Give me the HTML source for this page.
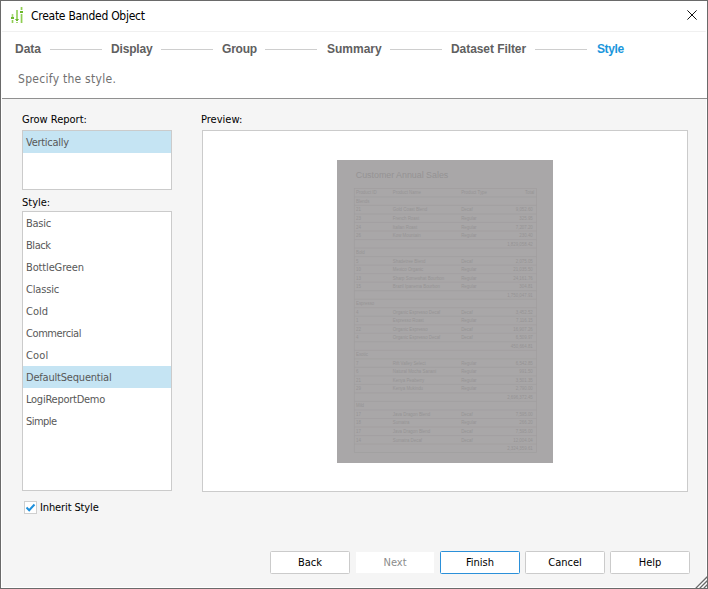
<!DOCTYPE html>
<html>
<head>
<meta charset="utf-8">
<title>Create Banded Object</title>
<style>
*{box-sizing:border-box;margin:0;padding:0}
html,body{width:708px;height:589px;overflow:hidden;background:#f5f5f5}
body{position:relative;font-family:"DejaVu Sans Condensed","DejaVu Sans","Liberation Sans",sans-serif;font-stretch:condensed;font-size:11px;color:#000}
.abs{position:absolute}
#frame{left:0;top:0;width:708px;height:589px;border:1px solid #6a6a6a}
#inner{left:1px;top:1px;width:706px;height:587px;border:1px solid #fff}
#titlebar{left:1px;top:1px;width:706px;height:30px;background:#fff}
#tline{left:2px;top:31px;width:703px;height:1px;background:#f0f0f0}
#header{left:1px;top:32px;width:706px;height:66px;background:#fff}
#hline{left:2px;top:98px;width:705px;height:1px;background:#909090}
#title{left:31px;top:9px;font-size:12px;line-height:15px;white-space:nowrap;color:#000;letter-spacing:-0.27px}
.step{top:42px;font-family:"Liberation Sans",sans-serif;font-weight:bold;font-size:12px;line-height:14px;color:#606060;white-space:nowrap}
.step.cur{color:#1a96dc}
.sl{top:49px;height:1px;background:#cecece;width:52px}
#desc{left:18px;top:71px;font-size:12px;line-height:16px;color:#707070;white-space:nowrap;letter-spacing:0.3px;word-spacing:-0.2px}
.lbl{font-size:11px;line-height:14px;white-space:nowrap;color:#000}
.list{background:#fff;border:1px solid #cbcbcb}
.item{left:1px;width:148px;height:22px;line-height:22px;padding:1px 0 0 3px;color:#585858;white-space:nowrap;font-size:11px}
.item.sel{background:#c5e4f3}
.btn{top:551px;width:80px;height:23px;background:#fff;border:1px solid #cbcbcb;border-radius:1.5px;text-align:center;line-height:21px;font-size:11px;color:#000}
.btn.dis{border-color:#f5f5f5;color:#8c8c8c}
.btn.def{border-color:#2b90d9}
</style>
</head>
<body>
<div class="abs" id="frame"></div>
<div class="abs" id="inner"></div>
<div class="abs" id="titlebar"></div>
<div class="abs" id="tline"></div>
<div class="abs" id="header"></div>
<div class="abs" id="hline"></div>

<svg class="abs" style="left:0;top:0" width="30" height="30" viewBox="0 0 30 30">
<g fill="#8fce52">
<rect x="11.7" y="14" width="1.6" height="3" opacity=".8"/><rect x="11.7" y="20" width="1.6" height="3"/>
<rect x="16" y="10" width="2" height="9" opacity=".8"/><rect x="16" y="22" width="2" height="1" opacity=".8"/>
<rect x="20.7" y="7" width="1.7" height="3"/><rect x="20.7" y="14" width="1.7" height="9"/>
</g>
<g fill="#6cb92d">
<rect x="11" y="17" width="3" height="2"/>
<rect x="15.3" y="19" width="3.4" height="1"/><rect x="16" y="20" width="2" height="1"/>
<rect x="20" y="11" width="3" height="2"/>
</g>
</svg>
<div class="abs" id="title">Create Banded Object</div>
<svg class="abs" style="left:686px;top:9px" width="12" height="12" viewBox="0 0 12 12"><path d="M1.4 1.4 L10.6 10.6 M10.6 1.4 L1.4 10.6" stroke="#111" stroke-width="1" fill="none"/></svg>

<div class="abs step" style="left:15px">Data</div>
<div class="abs sl" style="left:50px"></div>
<div class="abs step" style="left:111px;letter-spacing:-0.18px">Display</div>
<div class="abs sl" style="left:161px"></div>
<div class="abs step" style="left:222px;letter-spacing:-0.2px">Group</div>
<div class="abs sl" style="left:265px"></div>
<div class="abs step" style="left:327px">Summary</div>
<div class="abs sl" style="left:390px"></div>
<div class="abs step" style="left:451px;letter-spacing:-0.07px">Dataset Filter</div>
<div class="abs sl" style="left:535px"></div>
<div class="abs step cur" style="left:597px;letter-spacing:-0.4px">Style</div>
<div class="abs" id="desc">Specify the style.</div>

<div class="abs lbl" style="left:22px;top:113px">Grow Report:</div>
<div class="abs list" style="left:22px;top:130px;width:150px;height:60px"></div>
<div class="abs item sel" style="left:23px;top:131px;letter-spacing:-0.27px">Vertically</div>

<div class="abs lbl" style="left:22px;top:196px">Style:</div>
<div class="abs list" style="left:22px;top:211px;width:150px;height:280px"></div>
<div class="abs item" style="left:23px;top:212px;letter-spacing:-0.24px">Basic</div>
<div class="abs item" style="left:23px;top:234px;letter-spacing:-0.44px">Black</div>
<div class="abs item" style="left:23px;top:256px;letter-spacing:-0.14px">BottleGreen</div>
<div class="abs item" style="left:23px;top:278px;letter-spacing:-0.16px">Classic</div>
<div class="abs item" style="left:23px;top:300px;letter-spacing:0px">Cold</div>
<div class="abs item" style="left:23px;top:322px;letter-spacing:-0.42px">Commercial</div>
<div class="abs item" style="left:23px;top:344px;letter-spacing:0.15px">Cool</div>
<div class="abs item sel" style="left:23px;top:366px;letter-spacing:-0.2px">DefaultSequential</div>
<div class="abs item" style="left:23px;top:388px;letter-spacing:-0.25px">LogiReportDemo</div>
<div class="abs item" style="left:23px;top:410px;letter-spacing:-0.55px">Simple</div>

<div class="abs" style="left:24px;top:501px;width:13px;height:13px;background:#fff;border:1px solid #cfcfcf"></div>
<svg class="abs" style="left:24px;top:501px" width="13" height="13" viewBox="0 0 13 13"><path d="M2.5 6.5 L5.2 9.2 L10.5 3.5" stroke="#1e90dc" stroke-width="2" fill="none"/></svg>
<div class="abs lbl" style="left:40px;top:501px;letter-spacing:-0.12px">Inherit Style</div>

<div class="abs lbl" style="left:201px;top:113px">Preview:</div>
<div class="abs list" style="left:202px;top:130px;width:486px;height:362px"></div>
<svg class="abs" id="thumb" style="left:337px;top:160px" width="216" height="303" viewBox="0 0 216 303">
<rect width="216" height="303" fill="#a9a7a8"/>
<g font-family="Liberation Sans, sans-serif">
<text x="18.8" y="18.3" font-size="8.85" fill="#959394">Customer Annual Sales</text>
<g stroke="#a09e9f" stroke-width="0.7" fill="none">
<rect x="17.30" y="28.40" width="182.10" height="264.20"/>
<path d="M17.30 36.92H199.40M17.30 45.45H199.40M17.30 53.97H199.40M17.30 62.49H199.40M17.30 71.01H199.40M17.30 79.54H199.40M17.30 88.06H199.40M17.30 96.58H199.40M17.30 105.10H199.40M17.30 113.63H199.40M17.30 122.15H199.40M17.30 130.67H199.40M17.30 139.19H199.40M17.30 147.72H199.40M17.30 156.24H199.40M17.30 164.76H199.40M17.30 173.28H199.40M17.30 181.81H199.40M17.30 190.33H199.40M17.30 198.85H199.40M17.30 207.37H199.40M17.30 215.90H199.40M17.30 224.42H199.40M17.30 232.94H199.40M17.30 241.46H199.40M17.30 249.99H199.40M17.30 258.51H199.40M17.30 267.03H199.40M17.30 275.55H199.40M17.30 284.08H199.40"/>
</g>
<g font-size="4.4" fill="#969495" transform="scale(1 1.2)">
<text x="19.0" y="28.7">Product ID</text>
<text x="55.8" y="28.7">Product Name</text>
<text x="124.2" y="28.7">Product Type</text>
<text x="197.3" y="28.7" text-anchor="end">Total</text>
<text x="19.0" y="35.8">Blends</text>
<text x="19.0" y="42.9">21</text>
<text x="55.8" y="42.9">Gold Coast Blend</text>
<text x="124.2" y="42.9">Decaf</text>
<text x="195.8" y="42.9" text-anchor="end">9,052.60</text>
<text x="19.0" y="50.0">23</text>
<text x="55.8" y="50.0">French Roast</text>
<text x="124.2" y="50.0">Regular</text>
<text x="195.8" y="50.0" text-anchor="end">325.95</text>
<text x="19.0" y="57.1">24</text>
<text x="55.8" y="57.1">Italian Roast</text>
<text x="124.2" y="57.1">Regular</text>
<text x="195.8" y="57.1" text-anchor="end">7,207.20</text>
<text x="19.0" y="64.2">26</text>
<text x="55.8" y="64.2">Kow Mountain</text>
<text x="124.2" y="64.2">Regular</text>
<text x="195.8" y="64.2" text-anchor="end">230.40</text>
<text x="195.8" y="71.3" text-anchor="end">1,829,058.42</text>
<text x="19.0" y="78.4">Bold</text>
<text x="19.0" y="85.5">5</text>
<text x="55.8" y="85.5">Shadetree Blend</text>
<text x="124.2" y="85.5">Decaf</text>
<text x="195.8" y="85.5" text-anchor="end">2,075.05</text>
<text x="19.0" y="92.6">10</text>
<text x="55.8" y="92.6">Mexico Organic</text>
<text x="124.2" y="92.6">Regular</text>
<text x="195.8" y="92.6" text-anchor="end">21,035.50</text>
<text x="19.0" y="99.7">13</text>
<text x="55.8" y="99.7">Sharp Somewhat Bourbon</text>
<text x="124.2" y="99.7">Regular</text>
<text x="195.8" y="99.7" text-anchor="end">24,161.76</text>
<text x="19.0" y="106.8">15</text>
<text x="55.8" y="106.8">Brazil Ipanema Bourbon</text>
<text x="124.2" y="106.8">Regular</text>
<text x="195.8" y="106.8" text-anchor="end">304.81</text>
<text x="195.8" y="113.9" text-anchor="end">1,750,047.91</text>
<text x="19.0" y="121.0">Espresso</text>
<text x="19.0" y="128.1">4</text>
<text x="55.8" y="128.1">Organic Espresso Decaf</text>
<text x="124.2" y="128.1">Decaf</text>
<text x="195.8" y="128.1" text-anchor="end">3,452.52</text>
<text x="19.0" y="135.2">1</text>
<text x="55.8" y="135.2">Espresso Roast</text>
<text x="124.2" y="135.2">Regular</text>
<text x="195.8" y="135.2" text-anchor="end">7,116.15</text>
<text x="19.0" y="142.3">22</text>
<text x="55.8" y="142.3">Organic Espresso</text>
<text x="124.2" y="142.3">Decaf</text>
<text x="195.8" y="142.3" text-anchor="end">16,907.26</text>
<text x="19.0" y="149.4">4</text>
<text x="55.8" y="149.4">Organic Espresso Decaf</text>
<text x="124.2" y="149.4">Decaf</text>
<text x="195.8" y="149.4" text-anchor="end">6,509.97</text>
<text x="195.8" y="156.5" text-anchor="end">450,664.81</text>
<text x="19.0" y="163.6">Exotic</text>
<text x="19.0" y="170.7">7</text>
<text x="55.8" y="170.7">Rift Valley Select</text>
<text x="124.2" y="170.7">Regular</text>
<text x="195.8" y="170.7" text-anchor="end">6,542.85</text>
<text x="19.0" y="177.8">6</text>
<text x="55.8" y="177.8">Natural Mocha Sanani</text>
<text x="124.2" y="177.8">Regular</text>
<text x="195.8" y="177.8" text-anchor="end">991.50</text>
<text x="19.0" y="184.9">21</text>
<text x="55.8" y="184.9">Kenya Peaberry</text>
<text x="124.2" y="184.9">Regular</text>
<text x="195.8" y="184.9" text-anchor="end">3,501.35</text>
<text x="19.0" y="192.0">29</text>
<text x="55.8" y="192.0">Kenya Mukindu</text>
<text x="124.2" y="192.0">Regular</text>
<text x="195.8" y="192.0" text-anchor="end">2,790.00</text>
<text x="195.8" y="199.1" text-anchor="end">2,696,372.45</text>
<text x="19.0" y="206.2">Mild</text>
<text x="19.0" y="213.3">17</text>
<text x="55.8" y="213.3">Java Dragon Blend</text>
<text x="124.2" y="213.3">Decaf</text>
<text x="195.8" y="213.3" text-anchor="end">7,595.00</text>
<text x="19.0" y="220.4">18</text>
<text x="55.8" y="220.4">Sumatra</text>
<text x="124.2" y="220.4">Regular</text>
<text x="195.8" y="220.4" text-anchor="end">266.20</text>
<text x="19.0" y="227.5">17</text>
<text x="55.8" y="227.5">Java Dragon Blend</text>
<text x="124.2" y="227.5">Decaf</text>
<text x="195.8" y="227.5" text-anchor="end">7,595.00</text>
<text x="19.0" y="234.6">14</text>
<text x="55.8" y="234.6">Sumatra Decaf</text>
<text x="124.2" y="234.6">Decaf</text>
<text x="195.8" y="234.6" text-anchor="end">12,004.04</text>
<text x="195.8" y="241.7" text-anchor="end">2,324,359.61</text>
</g></g></svg>

<svg class="abs" style="left:693px;top:574px" width="14" height="14" viewBox="0 0 14 14"><path d="M1.6 14 L14 1.6 L14 14 Z" fill="#fff"/><path d="M2.8 14.2 L14.2 2.8 M6.8 14.2 L14.2 6.8 M10.8 14.2 L14.2 10.8" stroke="#6a6a6a" stroke-width="1.3" fill="none"/></svg>
<div class="abs btn" style="left:270px">Back</div>
<div class="abs btn dis" style="left:355px">Next</div>
<div class="abs btn def" style="left:440px">Finish</div>
<div class="abs btn" style="left:525px">Cancel</div>
<div class="abs btn" style="left:610px">Help</div>
</body>
</html>
